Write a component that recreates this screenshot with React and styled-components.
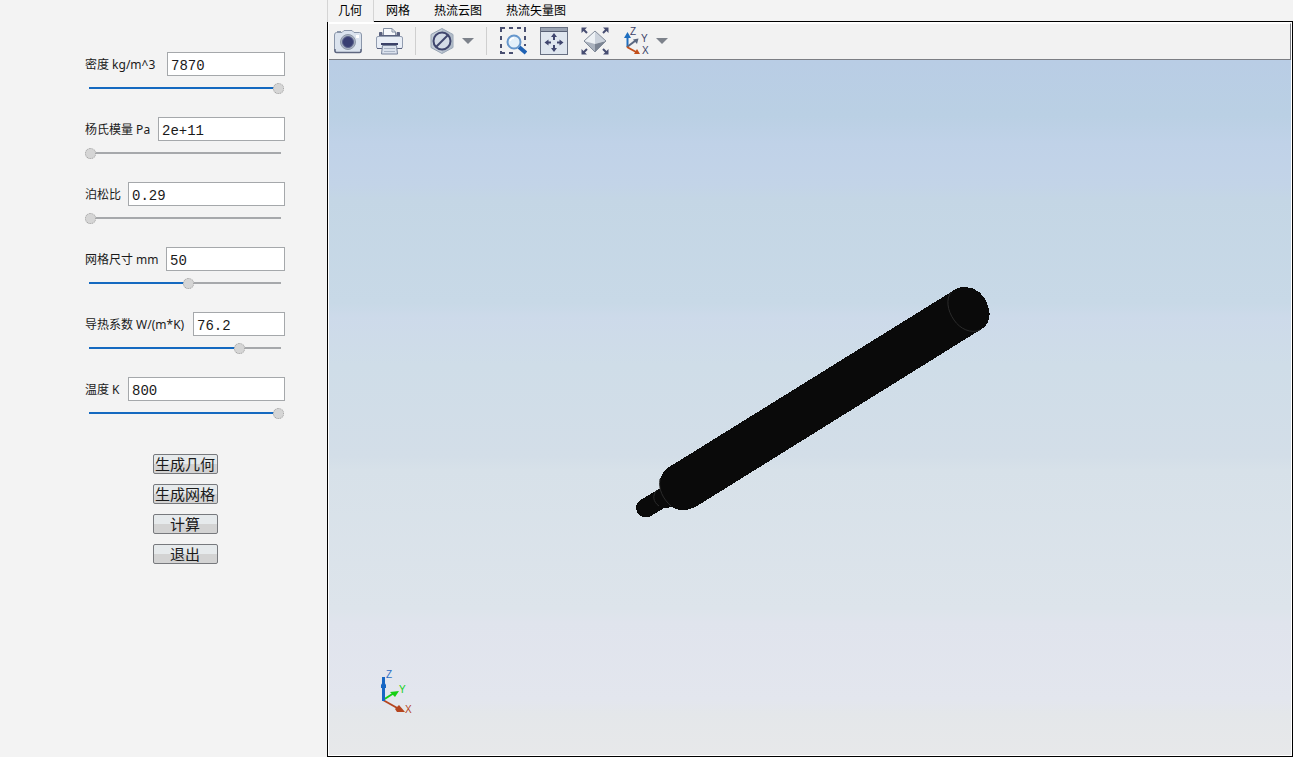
import styled, { createGlobalStyle } from 'styled-components';
import { useState } from 'react';

const FIELDS = [
    { id: 'density', label: '密度 kg/m^3', width: 75, value: '7870', level: 100 },
    { id: 'young', label: '杨氏模量 Pa', width: 66, value: '2e+11', level: 0 },
    { id: 'poisson', label: '泊松比', width: 36, value: '0.29', level: 0 },
    { id: 'mesh', label: '网格尺寸 mm', width: 74, value: '50', level: 52 },
    { id: 'conductivity', label: '导热系数 W/(m*K)', width: 101, value: '76.2', level: 79 },
    { id: 'temperature', label: '温度 K', width: 36, value: '800', level: 100 },
]

const ACTIONS = ['生成几何', '生成网格', '计算', '退出']

const TABS = ['几何', '网格', '热流云图', '热流矢量图']

function Field({ id, label, width, value, level }){

    const [text, setText] = useState(value)
    const [amount, setAmount] = useState(level)

    return(
        <StyledField>
            <StyledFieldRow>
                <StyledLabel htmlFor={id} $width={width}>{label}</StyledLabel>
                <StyledInput id={id} value={text} onChange={(e) => setText(e.target.value)} />
            </StyledFieldRow>
            <StyledSlider
                type="range"
                min="0"
                max="100"
                aria-label={label}
                value={amount}
                style={{ '--level': `${amount}%` }}
                onChange={(e) => setAmount(Number(e.target.value))}
            />
        </StyledField>
    )
}

function CameraIcon(){
    return(
        <svg width="28" height="28" viewBox="0 0 28 28">
            <path d="M2.5 5.500H8L10 3.500H18L20 5.500H25.5Q27.5 5.500 27.5 8V23Q27.5 25.5 25.5 25.5H2.500Q.5 25.5 .5 23V8Q.5 5.500 2.500 5.500Z" fill="#dbe3ee" stroke="#8a96aa" />
            <path d="M1 22V24Q1 25.5 2.500 25.5H25.5Q27 25.5 27 24V22" fill="none" stroke="#5f6780" strokeWidth="1.5" />
            <circle cx="14" cy="15" r="7.5" fill="#a9b3c3" stroke="#8d97a8" />
            <circle cx="14" cy="15" r="5.5" fill="#383e72" stroke="#5b628c" />
            <rect x="22" y="8" width="3" height="3" fill="#fff" />
            <rect x="3" y="4" width="4" height="2" fill="#8a96aa" />
        </svg>
    )
}

function PrinterIcon(){
    return(
        <svg width="28" height="28" viewBox="0 0 28 28">
            <path d="M8.500 9V1.500H17L20.500 5V9Z" fill="#f7f9fc" stroke="#8490a4" />
            <path d="M17 1.500V5H20.500" fill="none" stroke="#8490a4" />
            <path d="M4.500 5.500H7V8.500H22V5.500H24.500V10H4.500Z" fill="#59617f" stroke="#59617f" />
            <rect x="1.500" y="9.500" width="26" height="12" rx="1.5" fill="#e9eef6" stroke="#929db0" />
            <path d="M6 17H23" stroke="#3c4268" strokeWidth="2" />
            <path d="M2 21.500H7M22 21.500H27" stroke="#59617f" />
            <path d="M7.500 18.500H21.500L22.500 27H6.500Z" fill="#dbe2ed" stroke="#76829a" />
            <path d="M9 21.500H20M9 24.500H20" stroke="#aab5c6" />
        </svg>
    )
}

function HiddenIcon(){
    return(
        <svg width="28" height="28" viewBox="0 0 28 28">
            <path d="M14 1.500L25 7.500V20.500L14 26.500L3 20.500V7.500Z" fill="#c3ccd7" stroke="#97a4b3" />
            <path d="M14 1.500V26.500L25 20.500V7.500Z" fill="#a5b1c0" opacity="0.6" />
            <circle cx="14" cy="14" r="8.500" fill="#d3dbe6" stroke="#40466e" strokeWidth="2" />
            <path d="M8 20L20 8" stroke="#40466e" strokeWidth="2" />
        </svg>
    )
}

function ZoomAreaIcon(){
    return(
        <svg width="28" height="28" viewBox="0 0 28 28">
            <path d="M2 5V1H6M10 1H14M18 1H22M25 1H26V5M26 9V13M26 17V19M2 9V13M2 17V21M2 24V26H6M10 26H14" fill="none" stroke="#494f70" strokeWidth="2" />
            <path d="M20 20L27 26" stroke="#1f62b4" strokeWidth="4" />
            <circle cx="15" cy="15" r="6.500" fill="#e4f0fa" stroke="#6697cc" strokeWidth="2" />
            <path d="M11 14Q12 11 15 11" fill="none" stroke="#fff" strokeWidth="1.500" />
        </svg>
    )
}

function FitIcon(){
    return(
        <svg width="28" height="28" viewBox="0 0 28 28">
            <rect x=".5" y=".5" width="27" height="27" fill="#dfe6ef" stroke="#687082" />
            <rect x="1" y="1" width="26" height="3" fill="#9aa3b2" />
            <path d="M1 4.500H27" stroke="#596176" />
            <path d="M14 13V9M14 18V22M11 15.500H7M17 15.500H21" stroke="#3f456e" strokeWidth="2" />
            <path d="M14 6L17 10H11ZM14 25L17 21H11ZM4.500 15.500L8.500 12.500V18.500ZM23.500 15.500L19.500 12.500V18.500Z" fill="#3f456e" />
        </svg>
    )
}

function IsoViewIcon(){
    return(
        <svg width="28" height="28" viewBox="0 0 28 28">
            <path d="M14 4L25 14L14 17Z" fill="#cbd2dc" />
            <path d="M14 4L3 14L14 17Z" fill="#edf1f5" />
            <path d="M3 14L14 17V25Z" fill="#aab2be" />
            <path d="M25 14L14 17V25Z" fill="#7b8493" />
            <path d="M14 4L25 14L14 25L3 14Z" fill="none" stroke="#848d9b" />
            <path d="M6 6L2 2M22 6L26 2M6 22L2 26M22 22L26 26" stroke="#484e72" strokeWidth="2" />
            <path d="M.5 .5H6L.5 6ZM27.500 .5V6L22 .5ZM.5 27.500V22L6 27.500ZM27.500 27.500H22L27.500 22Z" fill="#484e72" />
        </svg>
    )
}

function AxesIcon(){
    return(
        <svg width="28" height="28" viewBox="0 0 28 28">
            <path d="M5.500 20V9" stroke="#1f6fc0" strokeWidth="2" />
            <path d="M5.500 5L9 11H2Z" fill="#1f6fc0" />
            <path d="M5 20L13 14" stroke="#5a6780" strokeWidth="2" />
            <path d="M16.500 11.500L15 17L11 12.500Z" fill="#5a6780" />
            <path d="M5 20L14 25" stroke="#c4501b" strokeWidth="2" />
            <path d="M18 27H12L15 22Z" fill="#c4501b" />
            <StyledIconText x="8" y="8">Z</StyledIconText>
            <StyledIconText x="19" y="15">Y</StyledIconText>
            <StyledIconText x="20" y="27">X</StyledIconText>
        </svg>
    )
}

function Arrow(){
    return(
        <svg width="12" height="6" viewBox="0 0 12 6">
            <path d="M0 0H12L6 6Z" fill="#7d828b" />
        </svg>
    )
}

function Scene(){
    return(
        <StyledScene viewBox="0 0 962 695" role="img" aria-label="几何">
            {/* 轴 */}
            <g fill="#0a0a0a" shapeRendering="crispEdges">
                <path d="M330 429L310 441C306 445 306 451 310 455C314 458 318 458 322 456L342 444Z" />
                <path d="M337 426L328 430C323 435 324 442 330 446C333 448 337 449 341 447L348 443Z" />
                <path d="M622 232L345 404C333 409 329 419 331 429C333 442 343 450 354 450C360 450 364 448 368 446L651 270C659 266 662 258 660 249C657 235 647 227 636 227C630 227 626 229 622 232Z" />
            </g>
            <g fill="none" stroke="#2b2b2b">
                <path d="M622 232C617 239 618 250 625 260C631 269 642 274 651 270" />
                <path d="M328 430C323 435 324 442 330 446" />
                <path d="M331 419C329 429 334 439 342 446" />
            </g>

            {/* 坐标轴 */}
            <path d="M54 640L65 633" stroke="#15d015" strokeWidth="2" />
            <path d="M70 631L66 637L61 632Z" fill="#15d015" />
            <path d="M54 640L70 649" stroke="#b5451f" strokeWidth="2" />
            <path d="M76 652H68L66 649L70 645Z" fill="#b5451f" />
            <path d="M54.500 641V617" stroke="#1767c4" strokeWidth="3" />
            <path d="M54.500 621L57 625V628H52V625Z" fill="#1767c4" />
            <StyledAxisText x="57" y="618" fill="#2f70c4">Z</StyledAxisText>
            <StyledAxisText x="70" y="633" fill="#15d015">Y</StyledAxisText>
            <StyledAxisText x="76" y="653" fill="#b5451f">X</StyledAxisText>
        </StyledScene>
    )
}

function App(){

    const [tab, setTab] = useState(0)

    return(
        <StyledWrap>
            <GlobalStyle />

            <StyledSidebar>
                {FIELDS.map((field) => (
                    <Field key={field.id} {...field} />
                ))}

                <StyledActions>
                    {ACTIONS.map((name) => (
                        <StyledButton key={name} type="button">{name}</StyledButton>
                    ))}
                </StyledActions>
            </StyledSidebar>

            <StyledMain>
                <StyledTabs role="tablist">
                    {TABS.map((name, i) => (
                        <StyledTab
                            key={name}
                            type="button"
                            role="tab"
                            aria-selected={tab === i}
                            $active={tab === i}
                            onClick={() => setTab(i)}
                        >
                            {name}
                        </StyledTab>
                    ))}
                    <StyledTabFill />
                </StyledTabs>

                <StyledPanel>
                    <StyledToolbar>
                        <StyledToolGroup>
                            <StyledTool type="button" aria-label="截图"><CameraIcon /></StyledTool>
                            <StyledTool type="button" aria-label="打印"><PrinterIcon /></StyledTool>
                        </StyledToolGroup>
                        <StyledToolGroup>
                            <StyledTool type="button" aria-label="隐藏"><HiddenIcon /></StyledTool>
                            <StyledMenuButton type="button" aria-label="隐藏选项"><Arrow /></StyledMenuButton>
                        </StyledToolGroup>
                        <StyledToolGroup>
                            <StyledTool type="button" aria-label="框选缩放"><ZoomAreaIcon /></StyledTool>
                            <StyledTool type="button" aria-label="适应窗口"><FitIcon /></StyledTool>
                            <StyledTool type="button" aria-label="视图"><IsoViewIcon /></StyledTool>
                            <StyledTool type="button" aria-label="坐标轴"><AxesIcon /></StyledTool>
                            <StyledMenuButton type="button" aria-label="坐标轴选项"><Arrow /></StyledMenuButton>
                        </StyledToolGroup>
                    </StyledToolbar>
                    <StyledViewport>
                        <Scene />
                    </StyledViewport>
                </StyledPanel>
            </StyledMain>
        </StyledWrap>
    )
}

export default App;

const GlobalStyle = createGlobalStyle`
* {
box-sizing: border-box;
}

body {
margin: 0;
background: #f3f3f3;
color: #1a1a1a;
font-family: "Noto Sans", "Noto Sans CJK SC", sans-serif;
font-size: 12px;
}

button {
font-family: inherit;
padding: 0;
}
`

const StyledWrap = styled.div`
display: flex;
min-height: 100vh;
`

const StyledSidebar = styled.aside`
display: flex;
flex-direction: column;
flex-shrink: 0;
width: 327px;
padding: 52px 42px 0 85px;
`

const StyledField = styled.div`
display: flex;
flex-direction: column;
width: 200px;
height: 65px;
gap: 5px;
`

const StyledFieldRow = styled.div`
display: flex;
align-items: center;
gap: 7px;
height: 24px;
`

const StyledLabel = styled.label`
flex-shrink: 0;
width: ${({ $width }) => $width}px;
line-height: 24px;
padding-top: 2px;
white-space: nowrap;
`

const StyledInput = styled.input`
flex: 1;
min-width: 0;
height: 24px;
padding: 3px 3px 0;
border: 1px solid #a5a8ab;
border-radius: 0;
background: #fff;
color: #1a1a1a;
font-family: "Liberation Mono", monospace;
font-size: 14px;
outline: none;
`

const StyledSlider = styled.input`
appearance: none;
width: 199px;
height: 14px;
margin: 0;
background: linear-gradient(to right, #1469c0 var(--level), #a6a8ab var(--level)) 4px center / 192px 2px no-repeat;
outline: none;

&::-webkit-slider-thumb {
appearance: none;
width: 11px;
height: 11px;
border: 1px dotted #a0a0a0;
border-radius: 50%;
background: #d5d5d5;
}
`

const StyledActions = styled.div`
display: flex;
flex-direction: column;
align-items: center;
width: 200px;
gap: 10px;
margin-top: 12px;
`

const StyledButton = styled.button`
width: 65px;
height: 20px;
border: 1px solid #77797d;
border-radius: 2px;
background: linear-gradient(#e6eaec 50%, #d3d3d3 50%);
color: #1a1a1a;
font-family: "Noto Sans CJK SC", sans-serif;
font-size: 15px;
line-height: 18px;
white-space: nowrap;
`

const StyledMain = styled.main`
display: flex;
flex: 1;
flex-direction: column;
min-width: 0;
`

const StyledTabs = styled.div`
display: flex;
height: 22px;
`

const StyledTab = styled.button`
padding: ${({ $active }) => ($active ? '0 11px 0 10px' : '0 12px')};
border: solid ${({ $active }) => ($active ? '#d4d4d4' : '#000')};
border-width: ${({ $active }) => ($active ? '0 1px' : '0 0 1px')};
background: transparent;
color: #000;
font-size: 12px;
line-height: 20px;
`

const StyledTabFill = styled.div`
flex: 1;
border-bottom: 1px solid #000;
`

const StyledPanel = styled.section`
display: flex;
flex: 1;
flex-direction: column;
padding: 1px;
border: 1px solid #000;
border-top: none;
background: #fff;
`

const StyledToolbar = styled.div`
display: flex;
align-items: center;
height: 37px;
padding-bottom: 2px;
border-top: 1px solid #fff;
border-right: 1px solid #7c7e84;
border-bottom: 1px solid #7c7e84;
background: #f2f2f2;
`

const StyledToolGroup = styled.div`
display: flex;
align-items: center;
gap: 13px;
height: 28px;
padding: 0 12px;

&:first-child {
padding-left: 5px;
}

& + & {
border-left: 1px solid #cfcfcf;
}
`

const StyledTool = styled.button`
display: flex;
width: 28px;
height: 28px;
border: none;
background: transparent;
`

const StyledMenuButton = styled.button`
display: flex;
align-items: center;
justify-content: center;
width: 12px;
height: 28px;
margin-left: -7px;
border: none;
background: transparent;
`

const StyledViewport = styled.div`
display: flex;
flex: 1;
background: linear-gradient(
    #b9cde5,
    #bad0e4 8%,
    #c0d2e8 12%,
    #c3d4e8 18%,
    #c4d6e5 20%,
    #c8d9e7 35%,
    #cddaea 37%,
    #cfdde8 44%,
    #d3dee8 57%,
    #d7e1e9 59%,
    #dde4eb 79%,
    #e0e4ed 81%,
    #e3e6ee 92%,
    #e4e7ea 94%,
    #e7e8ea
);
`

const StyledScene = styled.svg`
flex: 1;
width: 100%;
min-height: 0;
`

const StyledIconText = styled.text`
fill: #3c4268;
font-family: "Liberation Sans", sans-serif;
font-size: 10px;
`

const StyledAxisText = styled.text`
font-family: "Liberation Sans", sans-serif;
font-size: 10px;
`
